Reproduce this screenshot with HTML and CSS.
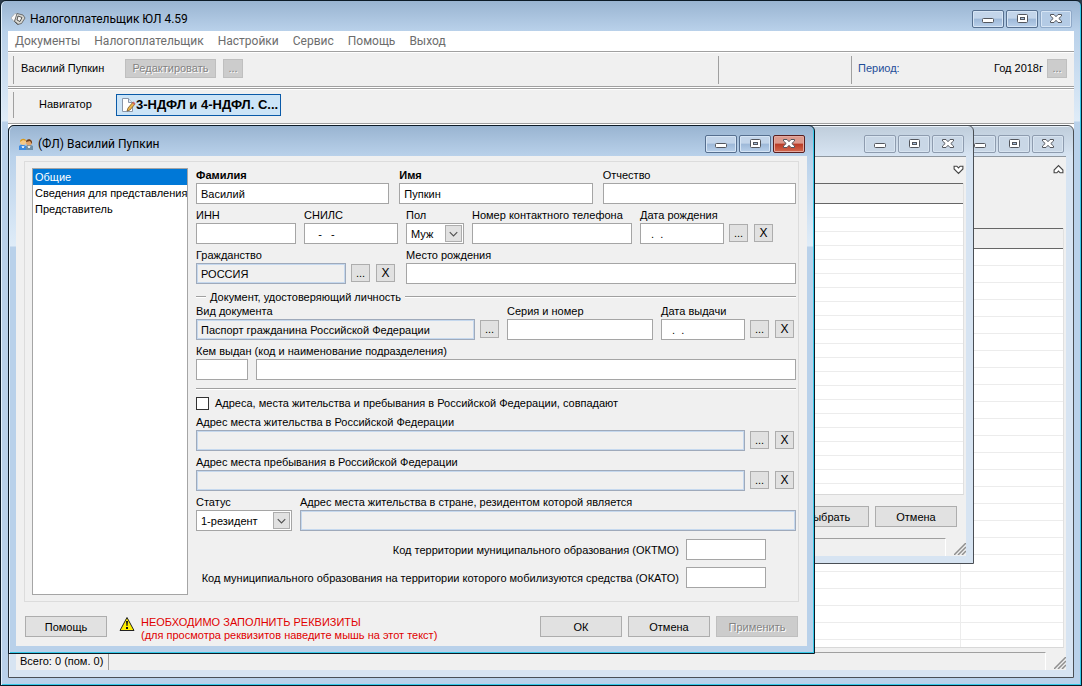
FILE: index.html
```html
<!DOCTYPE html>
<html lang="ru">
<head>
    <meta charset="UTF-8">
    <meta name="viewport" content="width=device-width, initial-scale=1.0">
    <title>Налогоплательщик ЮЛ 4.59</title>
    <link rel="stylesheet" href="styles.css">
</head>
<body>
    <!-- shared glyphs -->
    <svg class="symbols" aria-hidden="true">
        <symbol id="min" viewBox="0 0 30 16"><rect x="9.500" y="7.500" width="11" height="4" rx="1" fill="#fff" stroke="#53565d"/></symbol>
        <symbol id="max" viewBox="0 0 30 16"><rect x="10.500" y="3.500" width="10" height="8" rx="1" fill="#fff" stroke="#53565d"/><rect x="13.500" y="6.500" width="4" height="2" fill="#a9c0dc" stroke="#53565d"/></symbol>
        <symbol id="cross" viewBox="0 0 30 16"><path d="M9.500 3.500h3.500l2 2.200 2-2.200h3.500v1.500l-2.700 2.500 2.700 2.500v1.500h-3.500l-2-2.200-2 2.200h-3.500v-1.500l2.700-2.500-2.700-2.500z" fill="#fff" stroke="#53565d"/></symbol>
        <symbol id="grip" viewBox="0 0 12 12"><path d="M0 12L12 0M4 12l8-8M8 12l4-4" stroke="#8f8f8f" stroke-width="1.500"/></symbol>
        <symbol id="arrow" viewBox="0 0 16 16"><path d="M4 6.500l4 4 4-4" fill="none" stroke="#505050" stroke-width="1.200"/></symbol>
    </svg>

    <div class="window app">
        <div class="titlebar">
            <svg class="title-icon" viewBox="0 0 16 16">
                <path d="M1 7l4-4.500 3 1-4 7z" fill="#fafafa" stroke="#999" stroke-width=".6"/>
                <path d="M7 2.500l6 1.500 2 3-3.500 5.500-4 1-3-3z" fill="#d8d8d2" stroke="#555" stroke-width=".8"/>
                <path d="M8 5l4 1.500-2 4-3-1.500z" fill="#f4f4f4" stroke="#333" stroke-width=".8"/>
                <path d="M5 10.500l3 3" stroke="#444"/>
            </svg>
            <h1>Налогоплательщик ЮЛ 4.59</h1>
            <div class="controls">
                <button type="button" aria-label="Свернуть"><svg><use href="#min"/></svg></button>
                <button type="button" aria-label="Развернуть"><svg><use href="#max"/></svg></button>
                <button type="button" class="faded" aria-label="Закрыть"><svg><use href="#cross"/></svg></button>
            </div>
        </div>

        <nav class="menu">
            <a href="#">Документы</a>
            <a href="#">Налогоплательщик</a>
            <a href="#">Настройки</a>
            <a href="#">Сервис</a>
            <a href="#">Помощь</a>
            <a href="#">Выход</a>
        </nav>

        <div class="toolbar">
            <div class="tool-user">
                <span>Василий Пупкин</span>
                <button type="button" class="flat edit" disabled>Редактировать</button>
                <button type="button" class="flat" disabled>...</button>
            </div>
            <div class="tool-empty"></div>
            <div class="tool-period">
                <span class="period">Период:</span>
                <span>Год 2018г</span>
                <button type="button" class="flat" disabled>...</button>
            </div>
        </div>
        <div class="toolbar navigator">
            <span>Навигатор</span>
            <button type="button" class="doc-tab">
                <svg viewBox="0 0 16 16">
                    <path d="M2.500 1.500h6l4 4v9h-10z" fill="#fff" stroke="#8a96a8"/>
                    <path d="M8.500 1.500v4h4" fill="#dce6f2" stroke="#8a96a8"/>
                    <path d="M7 14l1-3 5-6 2 2-5 6z" fill="#e8b44c" stroke="#6b4a1d" stroke-width=".7"/>
                    <path d="M12 6l1.500-1.500 2 2-1.300 1.500z" fill="#c66"/>
                </svg>
                <span>3-НДФЛ и 4-НДФЛ. С...</span>
            </button>
        </div>

        <main class="mdi">
            <section class="window inactive list-window">
                <div class="titlebar">
                    <div class="controls">
                        <button type="button" aria-label="Свернуть"><svg><use href="#min"/></svg></button>
                        <button type="button" aria-label="Развернуть"><svg><use href="#max"/></svg></button>
                        <button type="button" aria-label="Закрыть"><svg><use href="#cross"/></svg></button>
                    </div>
                </div>
                <div class="client">
                    <div class="list-head">
                        <svg viewBox="0 0 10 10"><path d="M1 8V5.500l4-4 4 4V8H6.500L5 6.500 3.500 8z" fill="#fff" stroke="#444"/></svg>
                    </div>
                    <div class="rows"></div>
                    <div class="statusbar">
                        <span class="total">Всего: 0 (пом. 0)</span>
                        <span class="status-text"></span>
                        <svg><use href="#grip"/></svg>
                    </div>
                </div>
            </section>

            <section class="window inactive picker">
                <div class="titlebar">
                    <div class="controls">
                        <button type="button" aria-label="Свернуть"><svg><use href="#min"/></svg></button>
                        <button type="button" aria-label="Развернуть"><svg><use href="#max"/></svg></button>
                        <button type="button" aria-label="Закрыть"><svg><use href="#cross"/></svg></button>
                    </div>
                </div>
                <div class="client">
                    <div class="list-head">
                        <svg viewBox="0 0 10 10"><path d="M1 2v2.500l4 4 4-4V2H6.500L5 3.500 3.500 2z" fill="#fff" stroke="#444"/></svg>
                    </div>
                    <div class="rows"></div>
                    <div class="actions">
                        <button type="button" class="btn">Выбрать</button>
                        <button type="button" class="btn">Отмена</button>
                    </div>
                    <div class="statusbar">
                        <span class="status-text"></span>
                        <svg><use href="#grip"/></svg>
                    </div>
                </div>
            </section>

            <section class="window person">
                <div class="titlebar">
                    <svg class="title-icon" viewBox="0 0 16 16">
                        <path d="M1 14V10l3-2 4 2v4z" fill="#3d8be0"/>
                        <path d="M8 14v-4l3-2 4 2v4z" fill="#6e8fa8"/>
                        <circle cx="5" cy="6" r="3" fill="#f6c987"/>
                        <circle cx="11" cy="6.500" r="3" fill="#e3a468"/>
                        <path d="M2 6c0-4 6-4 6-1L5 4z" fill="#d99a1c"/>
                        <path d="M8 6c0-4 7-4 6 2l-2-3z" fill="#6b3d1c"/>
                        <path d="M4 10l1 2 1-2M10 10l1 2 1-2" stroke="#fff" fill="none"/>
                    </svg>
                    <h2>(ФЛ) Василий Пупкин</h2>
                    <div class="controls">
                        <button type="button" aria-label="Свернуть"><svg><use href="#min"/></svg></button>
                        <button type="button" aria-label="Развернуть"><svg><use href="#max"/></svg></button>
                        <button type="button" class="close" aria-label="Закрыть"><svg><use href="#cross"/></svg></button>
                    </div>
                </div>
                <form class="client">
                    <div class="panel">
                        <ul class="sections">
                            <li class="active"><a href="#">Общие</a></li>
                            <li><a href="#">Сведения для представления</a></li>
                            <li><a href="#">Представитель</a></li>
                        </ul>
                        <div class="form">
                            <div class="row wide-gap">
                                <div class="field grow">
                                    <label for="surname" class="required">Фамилия</label>
                                    <input type="text" id="surname" value="Василий">
                                </div>
                                <div class="field grow">
                                    <label for="name" class="required">Имя</label>
                                    <input type="text" id="name" value="Пупкин">
                                </div>
                                <div class="field grow">
                                    <label for="patronymic">Отчество</label>
                                    <input type="text" id="patronymic">
                                </div>
                            </div>
                            <div class="row">
                                <div class="field inn">
                                    <label for="inn">ИНН</label>
                                    <input type="text" id="inn">
                                </div>
                                <div class="field snils">
                                    <label for="snils">СНИЛС</label>
                                    <input type="text" id="snils" value="   -   -">
                                </div>
                                <div class="field sex">
                                    <label for="sex">Пол</label>
                                    <div class="select">
                                        <select id="sex"><option>Муж</option><option>Жен</option></select>
                                        <svg><use href="#arrow"/></svg>
                                    </div>
                                </div>
                                <div class="field phone">
                                    <label for="phone">Номер контактного телефона</label>
                                    <input type="text" id="phone">
                                </div>
                                <div class="field date">
                                    <label for="birthday">Дата рождения</label>
                                    <input type="text" id="birthday" value="  .  .">
                                </div>
                                <div class="pair">
                                    <button type="button" class="mini">...</button>
                                    <button type="button" class="mini clear">X</button>
                                </div>
                            </div>
                            <div class="row">
                                <div class="field citizenship">
                                    <label for="citizenship">Гражданство</label>
                                    <input type="text" id="citizenship" value="РОССИЯ" readonly>
                                </div>
                                <div class="pair before-field">
                                    <button type="button" class="mini">...</button>
                                    <button type="button" class="mini clear">X</button>
                                </div>
                                <div class="field grow">
                                    <label for="birthplace">Место рождения</label>
                                    <input type="text" id="birthplace">
                                </div>
                            </div>
                            <h3 class="group-title">Документ, удостоверяющий личность</h3>
                            <div class="row">
                                <div class="field grow">
                                    <label for="doc-type">Вид документа</label>
                                    <input type="text" id="doc-type" value="Паспорт гражданина Российской Федерации" readonly>
                                </div>
                                <div class="pair">
                                    <button type="button" class="mini">...</button>
                                </div>
                                <div class="field series">
                                    <label for="series">Серия и номер</label>
                                    <input type="text" id="series">
                                </div>
                                <div class="field date">
                                    <label for="issued">Дата выдачи</label>
                                    <input type="text" id="issued" value="  .  .">
                                </div>
                                <div class="pair at-end">
                                    <button type="button" class="mini">...</button>
                                    <button type="button" class="mini clear">X</button>
                                </div>
                            </div>
                            <div class="field">
                                <label for="issuer-code">Кем выдан (код и наименование подразделения)</label>
                                <div class="row">
                                    <input type="text" id="issuer-code" class="code">
                                    <input type="text" class="grow" aria-label="Наименование подразделения">
                                </div>
                            </div>
                            <hr>
                            <div class="check">
                                <input type="checkbox" id="same-address">
                                <label for="same-address">Адреса, места жительства и пребывания в Российской Федерации, совпадают</label>
                            </div>
                            <div class="row">
                                <div class="field grow">
                                    <label for="address">Адрес места жительства в Российской Федерации</label>
                                    <input type="text" id="address" readonly>
                                </div>
                                <div class="pair at-end">
                                    <button type="button" class="mini">...</button>
                                    <button type="button" class="mini clear">X</button>
                                </div>
                            </div>
                            <div class="row">
                                <div class="field grow">
                                    <label for="stay">Адрес места пребывания в Российской Федерации</label>
                                    <input type="text" id="stay" readonly>
                                </div>
                                <div class="pair at-end">
                                    <button type="button" class="mini">...</button>
                                    <button type="button" class="mini clear">X</button>
                                </div>
                            </div>
                            <div class="row">
                                <div class="field status">
                                    <label for="status">Статус</label>
                                    <div class="select">
                                        <select id="status"><option>1-резидент</option><option>2-нерезидент</option></select>
                                        <svg><use href="#arrow"/></svg>
                                    </div>
                                </div>
                                <div class="field grow">
                                    <label for="foreign">Адрес места жительства в стране, резидентом которой является</label>
                                    <input type="text" id="foreign" readonly>
                                </div>
                            </div>
                            <div class="codes">
                                <label for="oktmo">Код территории муниципального образования (ОКТМО)</label>
                                <input type="text" id="oktmo">
                                <label for="okato">Код муниципиального образования на территории которого мобилизуются средства (ОКАТО)</label>
                                <input type="text" id="okato">
                            </div>
                        </div>
                    </div>
                    <div class="footer">
                        <button type="button" class="btn">Помощь</button>
                        <svg class="warning-icon" viewBox="0 0 16 16">
                            <path d="M8 1.500L1 14.500h14z" fill="#ffee00" stroke="#222" stroke-linejoin="round"/>
                            <path d="M7 5h2l-.5 5h-1zM7 11h2v2H7z" fill="#111"/>
                        </svg>
                        <p class="warning">НЕОБХОДИМО ЗАПОЛНИТЬ РЕКВИЗИТЫ<br>(для просмотра реквизитов наведите мышь на этот текст)</p>
                        <button type="submit" class="btn">ОК</button>
                        <button type="button" class="btn">Отмена</button>
                        <button type="button" class="btn" disabled>Применить</button>
                    </div>
                </form>
            </section>
        </main>
    </div>
</body>
</html>
```
FILE: styles.css
```css
* {
    box-sizing: border-box;
}
body {
    margin: 0;
    background: #2b3a4a;
    color: #000;
    font-family: "Liberation Sans", Arial, sans-serif;
    font-size: 11px;
    line-height: 16px;
}
button, input, select {
    font: inherit;
    color: inherit;
    margin: 0;
}
h1, h2, h3, p, ul {
    margin: 0;
    padding: 0;
    font-size: inherit;
    font-weight: normal;
}
a {
    color: inherit;
    text-decoration: none;
}
.symbols {
    position: absolute;
    width: 0;
    height: 0;
}

/* windows */
.window {
    display: flex;
    flex-direction: column;
    padding: 0 7px 7px;
    border: 1px solid #0c1a26;
    border-radius: 6px 6px 0 0;
    background: linear-gradient(#99b4d1, #b9d1ea 30px, #dfecf8 120px, #b9d1ea 121px);
    box-shadow: inset 1px 0 #e3f0fb, inset -1px -1px #35c9e8;
}
.window.inactive {
    border-color: #4a4f55;
    background: linear-gradient(#bfcddb, #d7e4f2 30px);
    box-shadow: inset 1px 1px #e9f1f9;
}
.app {
    min-height: 100vh;
}
.titlebar {
    display: flex;
    align-items: center;
    height: 30px;
    padding: 6px 2px 0;
    font-family: Roboto, "Open Sans", sans-serif;
    font-size: 12px;
}
.title-icon {
    width: 16px;
    height: 16px;
    margin-right: 4px;
}
.controls {
    display: flex;
    gap: 2px;
    margin-left: auto;
}
.controls button {
    width: 32px;
    height: 18px;
    padding: 0;
    border: 1px solid #566f8f;
    border-radius: 2px;
    background: linear-gradient(#c3d5ea 45%, #9db8d8 50%, #b9d0ea);
    box-shadow: inset 0 0 0 1px #d6e5f5;
}
.controls svg {
    display: block;
    width: 30px;
    height: 16px;
}
.controls .faded {
    border-color: #8fa9c8;
    background: #b4cbe5;
}
.inactive .controls button {
    border-color: #8e9caf;
    background: #c9d7e6;
    box-shadow: inset 0 0 0 1px #d8e4f0;
}
.controls .close {
    border-color: #5a1f20;
    background: linear-gradient(#dc9a8e 45%, #b93a26 50%, #d46a50);
    box-shadow: inset 0 0 0 1px #e5aaa0;
}
.client {
    flex: 1;
    display: flex;
    flex-direction: column;
    min-height: 0;
    background: #f0f0f0;
}

/* menu and toolbars */
.menu {
    display: flex;
    gap: 14px;
    height: 20px;
    padding: 0 7px;
    background: #fff;
    color: #6d6d6d;
    font-family: Roboto, "Open Sans", sans-serif;
    font-size: 12px;
    line-height: 20px;
}
.toolbar {
    display: flex;
    height: 36px;
    padding: 4px 7px 2px 5px;
    border-top: 1px solid #a0a0a0;
    border-bottom: 1px solid #a0a0a0;
    background: #f0f0f0;
    box-shadow: inset 0 1px #fff;
}
.tool-user, .tool-empty, .tool-period {
    display: flex;
    align-items: center;
    padding-bottom: 4px;
    border-left: 1px solid #a0a0a0;
}
.tool-user {
    flex: 1;
    gap: 7px;
    padding-left: 7px;
}
.tool-user span {
    width: 97px;
}
.tool-empty {
    width: 133px;
}
.tool-period {
    width: 216px;
    gap: 4px;
    padding-left: 6px;
}
.period {
    margin-right: auto;
    color: #1f4e99;
}
.flat {
    width: 20px;
    height: 19px;
    padding: 0;
    border: 1px solid #bfbfbf;
    background: #ccc;
    color: #838383;
    line-height: 16px;
    text-shadow: 1px 1px #fff;
}
.flat.edit {
    width: 91px;
}
.navigator {
    align-items: center;
    gap: 22px;
    margin: 1px 0;
    padding: 3px 5px 5px;
    box-shadow: inset 0 1px #fff, 0 -1px #fff, 0 1px #fff;
}
.navigator > span {
    align-self: stretch;
    width: 81px;
    padding: 4px 0 0 25px;
    border-left: 1px solid #a0a0a0;
}
.doc-tab {
    display: flex;
    align-items: center;
    height: 22px;
    padding: 0 2px 0 3px;
    border: 1px solid #0a5aa8;
    background: #cce4f7;
    font-weight: bold;
    font-size: 13px;
}
.doc-tab svg {
    width: 16px;
    height: 16px;
}

/* child windows on the workspace */
.mdi {
    position: relative;
    flex: 1;
    min-height: 553px;
    background: #fff;
}
.mdi > .window {
    position: absolute;
}
.list-window {
    inset: 0;
}
.picker {
    top: 0;
    right: 100px;
    bottom: 114px;
    left: 200px;
}
.person {
    inset: 0 259px 24px 0;
    min-width: 760px;
}
.inactive .client {
    border-top: 1px solid #8f979f;
}
.list-head {
    display: flex;
    justify-content: flex-end;
    height: 71px;
    padding: 7px 2px;
}
.list-head svg {
    width: 11px;
    height: 11px;
}
.picker .list-head {
    height: 26px;
}
.rows {
    flex: 1;
    margin-right: 2px;
    border-right: 1px solid #e0e0e0;
    border-bottom: 1px solid #d8d8d8;
    background: linear-gradient(#666 1px, #f0f0f0 1px, #f0f0f0 20px, #666 20px, #666 21px, transparent 21px),
        linear-gradient(#ececec, #ececec) right 102px top 21px / 1px 100% no-repeat,
        repeating-linear-gradient(#fff 0 16px, #ececec 16px 17px) 0 21px;
}
.picker .rows {
    background: linear-gradient(#666 1px, #f0f0f0 1px, #f0f0f0 20px, #666 20px, #666 21px, transparent 21px),
        repeating-linear-gradient(#fff 0 13px, #ececec 13px 14px) 0 21px;
}
.statusbar {
    display: flex;
    align-items: flex-end;
    height: 18px;
    margin-top: 4px;
}
.statusbar svg {
    width: 12px;
    height: 12px;
    margin: 0 0 1px 8px;
}
.total, .status-text {
    height: 18px;
    border-top: 1px solid #a0a0a0;
    border-right: 1px solid #a0a0a0;
}
.total {
    width: 93px;
    padding-left: 4px;
}
.status-text {
    flex: 1;
    border-right-color: #fff;
}
.actions {
    display: flex;
    justify-content: flex-end;
    gap: 6px;
    padding: 11px 9px 7px;
}

/* person card */
.panel {
    flex: 1;
    display: flex;
    gap: 8px;
    margin: 5px 8px 0;
    padding: 6px 2px 6px 7px;
    border: 1px solid #dcdcdc;
}
.sections {
    width: 156px;
    border: 1px solid #a5a5a5;
    background: #fff;
    list-style: none;
    white-space: nowrap;
    overflow: hidden;
}
.sections a {
    display: block;
    padding: 0 2px;
}
.sections .active {
    background: #0078d7;
    color: #fff;
}
.form {
    flex: 1;
    display: flex;
    flex-direction: column;
    gap: 3px;
    margin-top: -1px;
}
.row {
    display: flex;
    align-items: flex-end;
    gap: 8px;
}
.row.wide-gap {
    gap: 10px;
}
.field {
    display: flex;
    flex-direction: column;
    white-space: nowrap;
}
.grow {
    flex: 1;
    min-width: 0;
}
.required {
    font-weight: bold;
}
.form input[type="text"], select {
    width: 100%;
    height: 21px;
    padding: 0 4px;
    border: 1px solid #a5a5a5;
    border-radius: 0;
    background: #fff;
    outline: none;
}
.form input[readonly] {
    border-color: #9faabb;
    background: #f0f0f0;
    box-shadow: inset 0 0 0 1px #c5d8ee;
}
.inn { width: 100px; }
.snils { width: 94px; }
.sex { width: 58px; }
.phone { width: 160px; }
.date { width: 84px; }
.citizenship { width: 150px; }
.series { width: 146px; }
.status { width: 96px; }
.form input.code { width: 52px; }
.form input.grow { width: auto; }
.select {
    position: relative;
    height: 21px;
}
select {
    appearance: none;
}
.select svg {
    position: absolute;
    top: 2px;
    right: 2px;
    width: 17px;
    height: 17px;
    border: 1px solid #adadad;
    background: #e1e1e1;
    pointer-events: none;
}
.pair {
    display: flex;
    gap: 6px;
    margin: 0 0 2px -3px;
}
.pair.before-field {
    margin-right: 3px;
}
.pair.at-end {
    margin-right: 2px;
}
.mini {
    width: 19px;
    height: 18px;
    padding: 0;
    border: 1px solid #adadad;
    background: #e1e1e1;
    line-height: 16px;
}
.mini.clear {
    font-size: 12px;
}
.group-title {
    display: flex;
    align-items: center;
    gap: 4px;
    margin-bottom: -3px;
    padding-top: 4px;
    line-height: 12px;
}
.group-title::before, .group-title::after {
    content: "";
    width: 10px;
    border-top: 1px solid #a0a0a0;
    border-bottom: 1px solid #fff;
}
.group-title::after {
    flex: 1;
}
hr {
    width: 100%;
    margin: 5px 0 2px;
    border: 0;
    border-top: 1px solid #a0a0a0;
    border-bottom: 1px solid #fff;
}
.check {
    display: flex;
    align-items: center;
    gap: 6px;
    height: 16px;
}
.check input {
    appearance: none;
    width: 13px;
    height: 13px;
    border: 1px solid #333;
    background: #fff;
}
.codes {
    display: grid;
    grid-template-columns: 1fr 80px;
    gap: 7px;
    align-items: center;
    margin-top: 5px;
    padding-right: 30px;
    text-align: right;
    white-space: nowrap;
}
.footer {
    display: flex;
    gap: 6px;
    padding: 14px 9px 9px;
}
.btn {
    width: 82px;
    height: 21px;
    padding: 0;
    border: 1px solid #adadad;
    background: #e1e1e1;
}
.btn:disabled {
    border-color: #bfbfbf;
    background: #ccc;
    color: #838383;
    text-shadow: 1px 1px #fff;
}
.warning-icon {
    width: 16px;
    height: 16px;
    margin-left: 6px;
}
.warning {
    flex: 1;
    height: 21px;
    color: #e00000;
    line-height: 13px;
    white-space: nowrap;
}
```
